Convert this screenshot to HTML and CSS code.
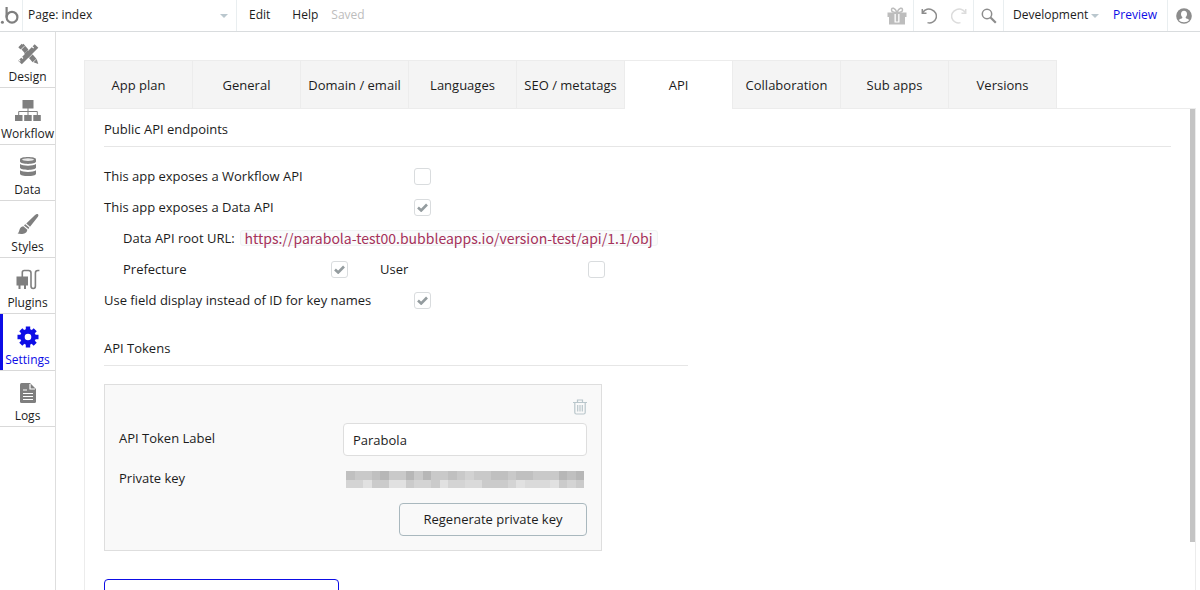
FILE: index.html
```html
<!DOCTYPE html>
<html lang="en">
<head>
    <meta charset="UTF-8">
    <meta name="viewport" content="width=device-width, initial-scale=1.0">
    <title>Settings - API</title>
    <link rel="stylesheet" href="styles.css">
</head>
<body>
    <!-- Top bar -->
    <header class="topbar">
        <a href="#" class="logo" aria-label="Home">
            <svg width="20" height="20" viewBox="0 0 20 20" fill="none" stroke="#7f7f7f" stroke-width="2.2">
                <circle cx="12" cy="11.2" r="5.4" />
                <path d="M6.600 1V11.500" />
                <circle cx="2.400" cy="16.300" r="1.500" fill="#7f7f7f" stroke="none" />
            </svg>
        </a>
        <select class="page-select" aria-label="Page">
            <option>Page: index</option>
        </select>
        <nav class="menu">
            <a href="#">Edit</a>
            <a href="#">Help</a>
            <span class="saved">Saved</span>
        </nav>
        <div class="tools">
            <button class="tool gift" aria-label="Gifts">
                <svg width="20" height="18" viewBox="0 0 20 18" fill="#bdbdbd">
                    <path d="M0.500 5.500h19v4.500h-19zM2 9.500h16V17.500H2z" />
                    <path d="M7.500 7h5v8.500h-5z" fill="#fff" />
                    <path d="M8.800 7h2.400v7.500H8.800z" />
                    <path d="M10 5.500C8 .5 4.500 0 4.500 3c0 2 2 2.500 5.500 2.500C13.500 5.500 15.500 5 15.500 3c0-3-3.500-2.500-5.500 2.500z" fill="none" stroke="#bdbdbd" stroke-width="1.500" />
                </svg>
            </button>
            <button class="tool undo" aria-label="Undo">
                <svg width="16" height="16" viewBox="0 0 16 16" fill="none" stroke="#8c8c8c" stroke-width="1.500">
                    <path d="M1.800 4.500C4 .8 8 .3 10.700 1.700A6.700 6.700 0 0 1 6.500 14.600" />
                    <path d="M1.300 1v4.200h4.200" />
                </svg>
            </button>
            <button class="tool redo" aria-label="Redo">
                <svg width="16" height="16" viewBox="0 0 16 16" fill="none" stroke="#dcdcdc" stroke-width="1.500">
                    <path d="M14.200 4.500C12 .8 8 .3 5.300 1.700A6.700 6.700 0 0 0 9.500 14.600" />
                    <path d="M14.700 1v4.200h-4.200" />
                </svg>
            </button>
            <button class="tool search" aria-label="Search">
                <svg width="16" height="16" viewBox="0 0 16 16" fill="none" stroke="#8c8c8c">
                    <circle cx="6" cy="6" r="4.700" stroke-width="1.500" />
                    <path d="M9.500 9.500l5.300 5.300" stroke-width="2.200" />
                </svg>
            </button>
            <select class="version-select" aria-label="Version">
                <option>Development</option>
            </select>
            <a href="#" class="preview">Preview</a>
            <button class="tool user" aria-label="Account">
                <svg width="16" height="16" viewBox="0 0 16 16">
                    <circle cx="8" cy="8" r="7.800" fill="#8c8c8c" />
                    <path d="M8 2.800c2 0 3 1.400 3 3.100 0 1.300-.5 2.300-1.300 3v1c.3.700 3 .9 3.700 2.200A7 7 0 0 1 8 14.300a7 7 0 0 1-5.400-2.200c.7-1.300 3.400-1.500 3.700-2.200v-1C5.500 8.200 5 7.200 5 5.900c0-1.700 1-3.100 3-3.100z" fill="#fff" />
                </svg>
            </button>
        </div>
    </header>

    <div class="workspace">
        <!-- Sidebar -->
        <nav class="sidebar">
            <div class="side-links">
                <a href="#" class="side-link">
                    <svg width="22" height="22" viewBox="0 0 22 22">
                        <path d="M4.500 2.500l13 15" stroke="#7f7f7f" stroke-width="5" />
                        <path d="M1.300 4.200L4.700.8l2.200 2.200-3.400 3.400zM16.500 19.300l3.200-3.200 1.600 5z" fill="#7f7f7f" />
                        <path d="M3.800 6.800l3.600-3.600" stroke="#fff" stroke-width=".8" />
                        <path d="M19.500 3L3 19.500" stroke="#fff" stroke-width="6.400" />
                        <path d="M19.500 3L3 19.500" stroke="#7f7f7f" stroke-width="5.200" />
                        <path d="M9 9l4 4" stroke="#7f7f7f" stroke-width="5" />
                        <path d="M15 3.500l1.700 1.700M4 13.500l2 2M1.800 16.800l1.500 1.500" stroke="#fff" stroke-width="1.100" />
                    </svg>
                    <span>Design</span>
                </a>
                <a href="#" class="side-link">
                    <svg width="26" height="22" viewBox="0 0 26 22" fill="#7f7f7f">
                        <path d="M7.500 0h11v8.500h-11zM0 15h7.500v6H0zM9.200 15h7.500v6H9.200zM18.300 15h7.500v6h-7.500z" />
                        <path d="M13 8v7M3.700 15v-3.500h18.600V15" fill="none" stroke="#7f7f7f" />
                    </svg>
                    <span>Workflow</span>
                </a>
                <a href="#" class="side-link">
                    <svg width="18" height="22" viewBox="0 0 18 22" fill="#7f7f7f">
                        <path d="M1 3.500C1 .3 17 .3 17 3.500v2c0 3.200-16 3.200-16 0z" />
                        <path d="M1 8c3 2.300 13 2.300 16 0v3.500c0 3.200-16 3.200-16 0zM1 14.200c3 2.300 13 2.300 16 0v3.500c0 3.200-16 3.200-16 0z" />
                        <ellipse cx="9" cy="3.600" rx="6" ry="1.300" fill="#e8e8e8" />
                    </svg>
                    <span>Data</span>
                </a>
                <a href="#" class="side-link">
                    <svg width="22" height="22" viewBox="0 0 22 22" fill="#7f7f7f">
                        <path d="M21 1.200c.8.800.4 1.800-.5 3L13 13.800 9.300 10.500l8.500-8.200c1.100-1.100 2.300-1.900 3.200-1.100z" />
                        <path d="M8.400 11.300l3.800 3.300c-.2.800-.5 1-.8 1.400L7 12.500c.4-.5.800-.8 1.400-1.200z" />
                        <path d="M6.300 13.200l4 3.500c-.3 4.300-5.500 4.800-9.800 3.800 2.500-1 1-6.800 5.800-7.300z" />
                    </svg>
                    <span>Styles</span>
                </a>
                <a href="#" class="side-link">
                    <svg width="24" height="22" viewBox="0 0 24 22" fill="none" stroke="#7f7f7f">
                        <path d="M.500 7.500h11.500v9H.5zM2.500 16h2v4h-2zM8 16h2v4H8z" fill="#7f7f7f" stroke="none" />
                        <path d="M6.300 8V3.500q0-2 2-2h4.200q2.500 0 2.500 2.500v13q0 2.500 2.200 2.500t2.200-2.500V4q0-2.500 2.500-2.500h1.500" stroke-width="1.600" />
                    </svg>
                    <span>Plugins</span>
                </a>
                <a href="#" class="side-link active">
                    <svg width="22" height="22" viewBox="0 0 22 22" fill="none" stroke="currentColor">
                        <circle cx="11" cy="11" r="5.600" stroke-width="4.600" />
                        <path d="M11 .5V4M11 18v3.500M.5 11H4M18 11h3.500M3.800 3.800l2.200 2.200M16 16l2.200 2.200M3.800 18.200L6 16M16 6l2.200-2.200" stroke-width="4.400" />
                    </svg>
                    <span>Settings</span>
                </a>
                <a href="#" class="side-link">
                    <svg width="16" height="22" viewBox="0 0 16 22">
                        <path d="M0 2.500Q0 1 1.500 1H10l6 6v12.500q0 1.500-1.500 1.500h-13Q0 21 0 19.500z" fill="#7f7f7f" />
                        <path d="M10 2v5h5M3 8h4M3 11.500h10M3 14.500h10M3 17.500h10" fill="none" stroke="#fff" stroke-width="1.200" />
                    </svg>
                    <span>Logs</span>
                </a>
            </div>
        </nav>

        <!-- Settings -->
        <main class="content">
            <nav class="tabs">
                <a href="#" class="tab">App plan</a>
                <a href="#" class="tab">General</a>
                <a href="#" class="tab">Domain / email</a>
                <a href="#" class="tab">Languages</a>
                <a href="#" class="tab">SEO / metatags</a>
                <a href="#" class="tab active">API</a>
                <a href="#" class="tab">Collaboration</a>
                <a href="#" class="tab">Sub apps</a>
                <a href="#" class="tab">Versions</a>
            </nav>

            <div class="panel">
                <div class="panel-scroll">
                    <h2 class="section-title">Public API endpoints</h2>
                    <div class="options">
                        <div class="option">
                            <label for="workflowApi">This app exposes a Workflow API</label>
                            <input type="checkbox" id="workflowApi">
                        </div>
                        <div class="option">
                            <label for="dataApi">This app exposes a Data API</label>
                            <input type="checkbox" id="dataApi" checked>
                        </div>
                        <div class="option nested">
                            <span>Data API root URL:</span>
                            <code>https://parabola-test00.bubbleapps.io/version-test/api/1.1/obj</code>
                        </div>
                        <div class="option nested types">
                            <div class="type">
                                <label for="typePrefecture">Prefecture</label>
                                <input type="checkbox" id="typePrefecture" checked>
                            </div>
                            <div class="type">
                                <label for="typeUser">User</label>
                                <input type="checkbox" id="typeUser">
                            </div>
                        </div>
                        <div class="option">
                            <label for="fieldDisplay">Use field display instead of ID for key names</label>
                            <input type="checkbox" id="fieldDisplay" checked>
                        </div>
                    </div>

                    <h2 class="section-title tokens-title">API Tokens</h2>
                    <form class="token-card">
                        <button type="button" class="delete-btn" aria-label="Delete token">
                            <svg width="14" height="16" viewBox="0 0 14 16" fill="none" stroke="#b9c6cb" stroke-width="1.200">
                                <path d="M0 3.500h14M4.500 3V1h5v2M1.800 3.500v10q0 1.500 1.500 1.500h7.400q1.500 0 1.500-1.500v-10M4.700 6v6.500M7 6v6.500M9.300 6v6.500" />
                            </svg>
                        </button>
                        <div class="field">
                            <label for="tokenLabel">API Token Label</label>
                            <input type="text" id="tokenLabel" value="Parabola">
                        </div>
                        <div class="field key-field">
                            <span>Private key</span>
                            <!-- Hidden key -->
                            <svg class="key-mask" viewBox="0 0 28 2" preserveAspectRatio="none" shape-rendering="crispEdges" role="img" aria-label="Hidden private key">
                                <path fill="#c9c9c9" d="M0 0h28v1H0z" />
                                <path fill="#d4d4d4" d="M0 1h28v1H0z" />
                                <path fill="#b7b7b7" d="M4 0h1v1H4zM7 0h1v1H7zM9 0h1v1H9zM25 0h1v1h-1zM27 0h1v1h-1z" />
                                <path fill="#c0c0c0" d="M0 0h1v1H0zM3 0h1v1H3zM12 0h1v1h-1zM17 0h2v1h-2zM20 0h2v1h-2zM26 0h1v1h-1z" />
                                <path fill="#d2d2d2" d="M14 0h1v1h-1z" />
                                <path fill="#cbcbcb" d="M3 1h2v1H3zM7 1h1v1H7zM10 1h1v1h-1zM16 1h3v1h-3zM25 1h1v1h-1zM27 1h1v1h-1z" />
                                <path fill="#e1e1e1" d="M2 1h1v1H2zM5 1h2v1H5zM11 1h1v1h-1zM20 1h1v1h-1zM24 1h1v1h-1z" />
                                <path fill="#dadada" d="M14 1h2v1h-2zM21 1h3v1h-3z" />
                            </svg>
                        </div>
                        <button type="button" class="regenerate-btn">Regenerate private key</button>
                    </form>

                    <button type="button" class="generate-btn">Generate a new API token</button>
                </div>
                <div class="scroll-thumb"></div>
            </div>
        </main>
    </div>
</body>
</html>
```
FILE: styles.css
```css
:root {
    --text-color: #1c1c1c;
    --muted-color: #bdbdbd;
    --primary-color: #0d0de6;
    --line-color: #e6e6e6;
    --tab-bg-color: #f4f4f4;
    --code-color: #a6325a;
}

* {
    margin: 0;
    padding: 0;
    box-sizing: border-box;
}

body {
    font-family: "Open Sans", "Noto Sans", sans-serif;
    font-size: 13px;
    line-height: 20px;
    color: var(--text-color);
    background-color: #fff;
    height: 100vh;
    display: flex;
    flex-direction: column;
    overflow: hidden;
}

a {
    color: inherit;
    text-decoration: none;
}

button,
input,
select {
    font: inherit;
    color: inherit;
}

button {
    background: none;
    border: none;
    cursor: pointer;
}

/* Top bar */
.topbar {
    display: flex;
    flex: none;
    height: 32px;
    font-size: 12px;
    border-bottom: 1px solid #d9dcde;
}

.logo {
    display: flex;
    align-items: center;
    width: 23px;
    border-right: 1px solid #e9eef0;
}

.page-select,
.version-select {
    appearance: none;
    border: none;
    background: url("data:image/svg+xml,%3Csvg xmlns='http://www.w3.org/2000/svg' width='8' height='4'%3E%3Cpath d='M0 0h8L4 4z' fill='%23bac7ce'/%3E%3C/svg%3E") no-repeat;
}

.page-select {
    width: 214px;
    padding: 0 24px 2px 5px;
    background-position: right 8px top 14px;
    border-right: 1px solid #e9eef0;
}

.menu {
    display: flex;
    align-items: center;
    padding: 0 0 2px 12px;
}

.menu a {
    margin-right: 22px;
}

.saved {
    color: var(--muted-color);
    margin-left: -9px;
}

.tools {
    display: flex;
    margin-left: auto;
}

.tool {
    display: flex;
    align-items: center;
    justify-content: center;
    width: 30px;
}

.gift {
    width: 33px;
    border-right: 1px solid #e9eef0;
}

.redo {
    border-right: 1px solid #e9eef0;
}

.search {
    border-right: 1px solid #e9eef0;
}

.version-select {
    width: 98px;
    padding: 0 0 2px 9px;
    background-position: right 3px top 14px;
}

.preview {
    display: flex;
    align-items: center;
    color: var(--primary-color);
    padding: 0 10px 2px 14px;
    border-right: 1px solid #e9eef0;
}

.version-select + .preview {
    padding-left: 11px;
}

.user {
    width: 32px;
}

/* Layout */
.workspace {
    display: flex;
    flex: 1;
    min-height: 0;
}

.sidebar {
    flex: none;
    width: 56px;
    border-right: 1px solid #dedede;
}

.side-links {
    display: grid;
    grid-auto-rows: 1fr;
    height: 395px;
}

.side-link {
    display: flex;
    flex-direction: column;
    align-items: center;
    justify-content: flex-end;
    gap: 2px;
    font-size: 12px;
    border-bottom: 1px solid #d9d9d9;
}

.side-link.active {
    color: var(--primary-color);
    box-shadow: inset 3px 0 0 var(--primary-color);
}

.content {
    display: flex;
    flex-direction: column;
    flex: 1;
    min-width: 0;
    padding: 28px 4px 0 28px;
}

/* Tabs */
.tabs {
    display: flex;
    border-left: 1px solid #ececec;
}

.tab {
    width: 108px;
    height: 48px;
    line-height: 48px;
    text-align: center;
    white-space: nowrap;
    background-color: var(--tab-bg-color);
    border-top: 1px solid #ececec;
    border-right: 1px solid #ececec;
}

.tab.active {
    background-color: #fff;
    height: 49px;
    margin-bottom: -1px;
    z-index: 1;
}

/* Panel */
.panel {
    flex: 1;
    min-height: 0;
    position: relative;
    border: 1px solid #ececec;
    border-bottom: none;
}

.panel-scroll {
    height: 100%;
    overflow-y: auto;
    padding: 10px 24px 24px 19px;
}

.scroll-thumb {
    position: absolute;
    top: 0;
    right: 0;
    width: 5px;
    height: 90%;
    background-color: #c4c4c4;
}

.section-title {
    font-size: 13px;
    font-weight: normal;
    padding-bottom: 7px;
    border-bottom: 1px solid var(--line-color);
}

.options {
    display: flex;
    flex-direction: column;
    gap: 1px;
    padding: 14px 0 23px;
}

.option {
    display: flex;
    align-items: center;
    height: 30px;
}

.option > label {
    width: 310px;
}

.nested {
    padding-left: 19px;
}

.types {
    gap: 32px;
}

.type {
    display: flex;
    align-items: center;
    justify-content: space-between;
    width: 225px;
}

input[type="checkbox"] {
    appearance: none;
    width: 17px;
    height: 17px;
    background-color: #fff;
    border: 1px solid #d9dcde;
    border-radius: 3px;
}

input[type="checkbox"]:checked {
    background: url("data:image/svg+xml,%3Csvg xmlns='http://www.w3.org/2000/svg' width='11' height='9'%3E%3Cpath d='M1 4.500l3.200 3L10 1.500' fill='none' stroke='%23949c9f' stroke-width='2.600'/%3E%3C/svg%3E") no-repeat center;
}

code {
    font-family: "Noto Sans CJK JP", sans-serif;
    font-size: 14px;
    line-height: 14px;
    color: var(--code-color);
    background-color: #f9fbfb;
    border: 1px solid #f0f3f3;
    border-radius: 3px;
    margin-left: 5px;
    padding: 0 4px;
}

.tokens-title {
    max-width: 584px;
}

/* Token card */
.token-card {
    display: flex;
    flex-direction: column;
    width: 498px;
    margin-top: 18px;
    padding: 14px;
    background-color: #f9f9f9;
    border: 1px solid #dedede;
}

.delete-btn {
    display: flex;
    align-self: flex-end;
    margin-bottom: 8px;
}

.field {
    display: flex;
    align-items: center;
    justify-content: space-between;
}

.field label,
.field span {
    padding-bottom: 4px;
}

.field input {
    width: 244px;
    height: 33px;
    padding: 0 9px;
    background-color: #fff;
    border: 1px solid #dedede;
    border-radius: 4px;
}

.key-field {
    height: 47px;
}

.key-mask {
    width: 238px;
    height: 17px;
    margin-right: 3px;
}

.regenerate-btn {
    align-self: flex-end;
    width: 188px;
    height: 33px;
    padding-bottom: 2px;
    border: 1px solid #a9b8be;
    border-radius: 4px;
}

.generate-btn {
    width: 235px;
    height: 33px;
    margin-top: 28px;
    padding-bottom: 2px;
    color: var(--primary-color);
    border: 1px solid var(--primary-color);
    border-radius: 4px;
}
```
